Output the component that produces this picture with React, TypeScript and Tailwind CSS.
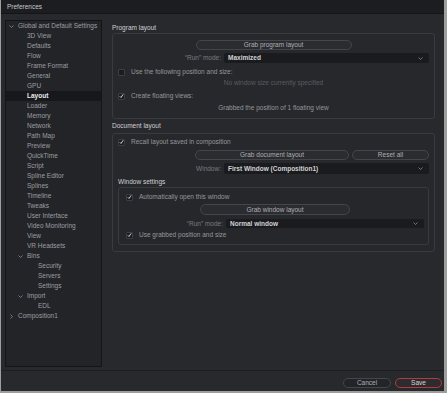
import React from "react";

const font = { fontFamily: '"Liberation Sans", Arial, sans-serif' };

type Node = { label: string; level: number; open?: boolean; closed?: boolean; selected?: boolean };

const tree: Node[] = [
  { label: "Global and Default Settings", level: 0, open: true },
  { label: "3D View", level: 1 },
  { label: "Defaults", level: 1 },
  { label: "Flow", level: 1 },
  { label: "Frame Format", level: 1 },
  { label: "General", level: 1 },
  { label: "GPU", level: 1 },
  { label: "Layout", level: 1, selected: true },
  { label: "Loader", level: 1 },
  { label: "Memory", level: 1 },
  { label: "Network", level: 1 },
  { label: "Path Map", level: 1 },
  { label: "Preview", level: 1 },
  { label: "QuickTime", level: 1 },
  { label: "Script", level: 1 },
  { label: "Spline Editor", level: 1 },
  { label: "Splines", level: 1 },
  { label: "Timeline", level: 1 },
  { label: "Tweaks", level: 1 },
  { label: "User Interface", level: 1 },
  { label: "Video Monitoring", level: 1 },
  { label: "View", level: 1 },
  { label: "VR Headsets", level: 1 },
  { label: "Bins", level: 1, open: true },
  { label: "Security", level: 2 },
  { label: "Servers", level: 2 },
  { label: "Settings", level: 2 },
  { label: "Import", level: 1, open: true },
  { label: "EDL", level: 2 },
  { label: "Composition1", level: 0, closed: true },
];

const indent = ["pl-[3px]", "pl-[12px]", "pl-[23px]"];

function Chevron({ down }: { down: boolean }) {
  return (
    <svg width="5" height="5" viewBox="0 0 5 5" className="text-[#8a8b90]">
      {down ? (
        <polyline points="0.5,1.5 2.5,3.5 4.5,1.5" fill="none" stroke="currentColor" strokeWidth="0.8" />
      ) : (
        <polyline points="1.5,0.5 3.5,2.5 1.5,4.5" fill="none" stroke="currentColor" strokeWidth="0.8" />
      )}
    </svg>
  );
}

function Check({ on }: { on: boolean }) {
  return (
    <span className="flex h-[7px] w-[7px] items-center justify-center rounded-[1px] border border-[#3d3e43] bg-[#1b1c1f]">
      {on && (
        <svg width="6" height="6" viewBox="0 0 6 6">
          <polyline points="1,3.4 2.4,4.8 5,1" fill="none" stroke="#e4e4e4" strokeWidth="1.1" />
        </svg>
      )}
    </span>
  );
}

function CheckRow({ on, label, className = "" }: { on: boolean; label: string; className?: string }) {
  return (
    <div className={`flex h-[10px] items-center gap-[6px] ${className}`}>
      <Check on={on} />
      <span className="text-[#96979b]">{label}</span>
    </div>
  );
}

function PillButton({ label, className = "" }: { label: string; className?: string }) {
  return (
    <div
      className={`flex items-center justify-center rounded-full border border-[#45464b] bg-[#2b2c30] text-[#aeafb3] ${className}`}
    >
      {label}
    </div>
  );
}

function Select({
  label,
  value,
  labelW,
  className = "",
}: {
  label: string;
  value: string;
  labelW: string;
  className?: string;
}) {
  return (
    <div className={`flex items-center gap-[3px] ${className}`}>
      <span className={`${labelW} text-right text-[#7a7b80]`}>{label}</span>
      <div className="flex h-full flex-1 items-center justify-between rounded-[2px] bg-[#1a1b1e] pl-[4px] pr-[6px]">
        <span className="font-bold text-[#d2d2d4]">{value}</span>
        <Chevron down />
      </div>
    </div>
  );
}

export default function App() {
  return (
    <div className="flex h-[393px] w-[447px] bg-[#9e9e9e] pb-[2px] pl-px pr-[3px] text-[6.5px] leading-[10px]" style={font}>
      <div className="flex flex-1 flex-col bg-[#28292d]">
        {/* title bar */}
        <div className="flex h-[14px] items-center border-b border-[#141517] bg-[#1c1d20] px-[6px] text-[#c9c9cb]">
          Preferences
        </div>

        <div className="flex flex-1 pb-[3px] pt-[6px]">
          {/* tree */}
          <div className="ml-[4px] w-[97px] border border-[#141518] bg-[#232428]">
            {tree.map((n) => (
              <div
                key={n.label}
                className={`flex h-[10px] items-center ${indent[n.level]} ${
                  n.selected ? "bg-[#17181b] font-bold text-[#ececec]" : "text-[#9d9ea2]"
                }`}
              >
                <span className="flex w-[9px] items-center">
                  {n.open && <Chevron down />}
                  {n.closed && <Chevron down={false} />}
                </span>
                {n.label}
              </div>
            ))}
          </div>

          {/* settings */}
          <div className="ml-[10px] mr-[9px] flex flex-1 flex-col pt-[3px]">
            <div className="h-[10px] text-[#cfd0d3]">Program layout</div>
            <div className="flex flex-col rounded-[3px] border border-[#3a3b40] bg-[#27282c] px-[5px] pb-[5px] pt-[6px]">
              <PillButton label="Grab program layout" className="mx-auto h-[10px] w-[156px]" />
              <Select label={"\u201cRun\u201d mode:"} value="Maximized" labelW="w-[103px]" className="mt-[3px] h-[10px]" />
              <CheckRow on={false} label="Use the following position and size:" className="mt-[4px]" />
              <div className="mt-px h-[10px] text-center text-[#5a5b60]">No window size currently specified</div>
              <CheckRow on label="Create floating views:" className="mt-[3px]" />
              <div className="mt-[2px] h-[10px] text-center text-[#96979b]">Grabbed the position of 1 floating view</div>
            </div>

            <div className="mt-[2px] h-[10px] text-[#cfd0d3]">Document layout</div>
            <div className="mt-[2px] flex flex-col rounded-[3px] border border-[#3a3b40] bg-[#27282c] px-[5px] pb-[6px] pt-[3px]">
              <CheckRow on label="Recall layout saved in composition" />
              <div className="mt-[3px] flex h-[10px] gap-[3px] pl-[77px]">
                <PillButton label="Grab document layout" className="h-full w-[154px]" />
                <PillButton label="Reset all" className="h-full w-[77px]" />
              </div>
              <Select label="Window:" value="First Window (Composition1)" labelW="w-[103px]" className="mt-[3px] h-[11px]" />
              <div className="mt-[3px] h-[10px] text-[#cfd0d3]">Window settings</div>
              <div className="flex flex-col rounded-[3px] border border-[#3a3b40] bg-[#26272b] pb-[4px] pl-[7px] pr-[4px] pt-[4px]">
                <CheckRow on label="Automatically open this window" />
                <PillButton label="Grab window layout" className="mx-auto mt-[2px] h-[11px] w-[150px]" />
                <Select label={"\u201cRun\u201d mode:"} value="Normal window" labelW="w-[97px]" className="mt-[4px] h-[9px]" />
                <CheckRow on label="Use grabbed position and size" className="mt-[2px]" />
              </div>
            </div>
          </div>
        </div>

        {/* footer */}
        <div className="flex h-[21px] items-start justify-end gap-[4px] border-t border-[#1d1e21] pr-[2px] pt-[7px]">
          <PillButton label="Cancel" className="h-[10px] w-[48px] border-[#4a4b50] bg-[#232428]" />
          <PillButton label="Save" className="h-[10px] w-[47px] border-[#b8393b] bg-[#1f2023] text-[#d6d6d8]" />
        </div>
      </div>
    </div>
  );
}
